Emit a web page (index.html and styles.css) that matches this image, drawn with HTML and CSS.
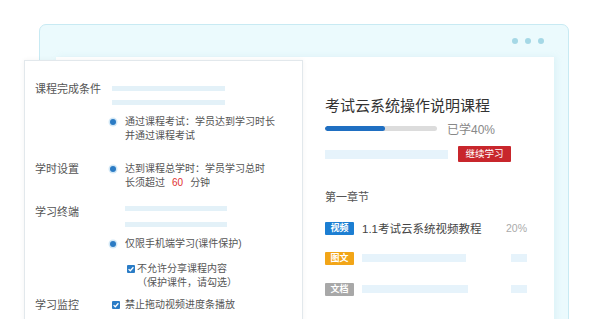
FILE: index.html
```html
<!DOCTYPE html>
<html lang="zh-CN">
<head>
  <meta charset="UTF-8" />
  <meta name="viewport" content="width=device-width, initial-scale=1.0" />
  <title>考试云课程设置</title>
  <link rel="stylesheet" href="styles.css">
</head>
<body>
  <div class="stage">
    <div class="window">
      <div class="window-bar">
        <span class="dot"></span>
        <span class="dot"></span>
        <span class="dot"></span>
      </div>
      <div class="window-body">
        <div class="course">
          <h1 class="course-title">考试云系统操作说明课程</h1>
          <div class="progress-row">
            <div class="progress"><div class="progress-fill" style="width:54%"></div></div>
            <span class="progress-text">已学40%</span>
          </div>
          <div class="action-row">
            <div class="ghost-bar wide"></div>
            <button class="btn-continue">继续学习</button>
          </div>

          <div class="chapter">第一章节</div>
          <div class="lesson">
            <span class="badge video">视频</span>
            <span class="lesson-name">1.1考试云系统视频教程</span>
            <span class="lesson-pct">20%</span>
          </div>
          <div class="lesson">
            <span class="badge text">图文</span>
            <div class="ghost-bar"></div>
            <div class="ghost-chip"></div>
          </div>
          <div class="lesson">
            <span class="badge doc">文档</span>
            <div class="ghost-bar longer"></div>
            <div class="ghost-chip"></div>
          </div>
        </div>
      </div>
    </div>

    <div class="settings-card">
      <div class="section s-complete">
        <div class="label">课程完成条件</div>
        <div class="controls">
          <div class="line-bar first"></div>
          <div class="line-bar"></div>
          <div class="option radio-opt">
            <span class="radio"></span>
            <span>通过课程考试：学员达到学习时长<br>并通过课程考试</span>
          </div>
        </div>
      </div>

      <div class="section s-hours">
        <div class="label">学时设置</div>
        <div class="controls">
          <div class="option">
            <span class="radio"></span>
            <span>达到课程总学时：学员学习总时<br>长须超过<em class="num">60</em>分钟</span>
          </div>
        </div>
      </div>

      <div class="section s-device">
        <div class="label">学习终端</div>
        <div class="controls">
          <div class="line-bar short first"></div>
          <div class="line-bar short"></div>
          <div class="option radio-opt">
            <span class="radio"></span>
            <span>仅限手机端学习(课件保护)</span>
          </div>
          <div class="option check-opt nested">
            <span class="check"><svg viewBox="0 0 8 8" width="8" height="8"><path d="M1.6 4.1 3.3 5.7 6.4 2.3" fill="none" stroke="#fff" stroke-width="1.3"/></svg></span>
            <span>不允许分享课程内容<br>（保护课件，请勾选）</span>
          </div>
        </div>
      </div>

      <div class="section s-monitor">
        <div class="label">学习监控</div>
        <div class="controls">
          <div class="option">
            <span class="check"><svg viewBox="0 0 8 8" width="8" height="8"><path d="M1.6 4.1 3.3 5.7 6.4 2.3" fill="none" stroke="#fff" stroke-width="1.3"/></svg></span>
            <span>禁止拖动视频进度条播放</span>
          </div>
        </div>
      </div>
    </div>
  </div>
</body>
</html>
```

FILE: styles.css
```css
* {
  box-sizing: border-box;
}
body {
  margin: 0;
  background: #fff;
  font-family: "Liberation Sans", "Noto Sans CJK SC", sans-serif;
  color: #555;
}
.stage {
  position: relative;
  width: 603px;
  height: 319px;
  overflow: hidden;
  padding: 24px 0 0 39px;
}

/* browser window */
.window {
  width: 530px;
  height: 330px;
  border: 1px solid #c8eaf3;
  border-radius: 7px;
  background: #ebfafd;
}
.window-bar {
  height: 32px;
  display: flex;
  justify-content: flex-end;
  align-items: center;
  gap: 7px;
  padding-right: 24px;
}
.dot {
  width: 6px;
  height: 6px;
  border-radius: 50%;
  background: #a5d8e6;
}
.window-body {
  margin: 0 14px 0 16px;
  height: 300px;
  background: #fff;
  box-shadow: 2px 0 6px rgba(190, 225, 235, 0.35);
  padding: 40px 0 0 269px;
}

/* course panel */
.course-title {
  margin: 0;
  font-size: 15px;
  line-height: 18px;
  font-weight: normal;
  color: #333;
}
.progress-row {
  display: flex;
  align-items: center;
  gap: 10px;
  height: 14px;
  margin-top: 6px;
}
.progress {
  width: 112px;
  height: 5px;
  border-radius: 3px;
  background: #dcdcdc;
  overflow: hidden;
}
.progress-fill {
  height: 100%;
  background: #1f6fc2;
  border-radius: 3px;
}
.progress-text {
  font-size: 12px;
  color: #888;
}
.action-row {
  display: flex;
  align-items: center;
  gap: 10px;
  margin-top: 11px;
}
.ghost-bar {
  width: 104px;
  height: 8px;
  background: #e6f3fb;
}
.ghost-bar.wide {
  width: 123px;
  height: 9px;
}
.ghost-bar.longer {
  width: 106px;
}
.btn-continue {
  width: 53px;
  height: 16px;
  padding: 0;
  border: none;
  border-radius: 1px;
  background: #c8262c;
  color: #fff;
  font-family: inherit;
  font-size: 9.5px;
  line-height: 16px;
}
.chapter {
  margin-top: 28px;
  font-size: 11px;
  line-height: 14px;
  color: #555;
}
.lesson {
  display: grid;
  grid-template-columns: 29px 133px 24px;
  column-gap: 8px;
  align-items: center;
  height: 14px;
  margin-top: 16px;
}
.lesson + .lesson {
  margin-top: 17px;
}
.badge {
  height: 13px;
  border-radius: 1px;
  color: #fff;
  font-size: 9px;
  font-weight: bold;
  line-height: 13px;
  text-align: center;
}
.badge.video { background: #1c7ed2; }
.badge.text { background: #f2a517; }
.badge.doc { background: #a8a8a8; }
.lesson-name {
  font-size: 11.5px;
  color: #444;
  white-space: nowrap;
}
.lesson-pct {
  font-size: 10.5px;
  color: #aaa;
  justify-self: end;
}
.ghost-chip {
  justify-self: end;
  width: 16px;
  height: 8px;
  background: #e6f3fb;
}

/* settings card, lies over the window */
.settings-card {
  position: absolute;
  left: 24px;
  top: 60px;
  width: 279px;
  height: 280px;
  background: #fff;
  border: 1px solid #e2e8ec;
  box-shadow: 0 0 5px rgba(0, 0, 0, 0.05);
  padding: 21px 0 0 10px;
}
.section {
  display: grid;
  grid-template-columns: 75px 1fr;
}
.s-hours { margin-top: 19px; }
.s-device { margin-top: 15px; }
.s-monitor { margin-top: 8px; }
.label {
  font-size: 11px;
  line-height: 14px;
  color: #555;
}
.controls {
  display: flex;
  flex-direction: column;
}
.line-bar {
  width: 113px;
  height: 5px;
  margin: 9px 0 0 2px;
  background: #e3f1f8;
}
.line-bar.first { margin-top: 4px; }
.line-bar.short {
  width: 102px;
  margin-left: 15px;
}
.s-device .line-bar.first { margin-top: 1px; }
.s-device .line-bar { margin-top: 11px; }
.option {
  display: flex;
  align-items: flex-start;
  font-size: 10px;
  line-height: 14px;
  color: #555;
  white-space: nowrap;
}
.radio-opt { margin-top: 10px; }
.check-opt { margin-top: 11px; }
.radio {
  flex: none;
  width: 6px;
  height: 6px;
  margin: 4px 9px 0 0;
  border-radius: 50%;
  background: #2b7bc4;
  box-shadow: 0 0 0 1.5px #d3e8f6;
}
.check {
  flex: none;
  width: 8px;
  height: 8px;
  margin: 3px 5px 0 2px;
  border-radius: 1px;
  background: #2a7cc6;
  display: flex;
}
.nested {
  padding-left: 15px;
}
.nested .check {
  margin-right: 2px;
}
.num {
  font-style: normal;
  color: #e02f2f;
  margin: 0 7px;
}
```
